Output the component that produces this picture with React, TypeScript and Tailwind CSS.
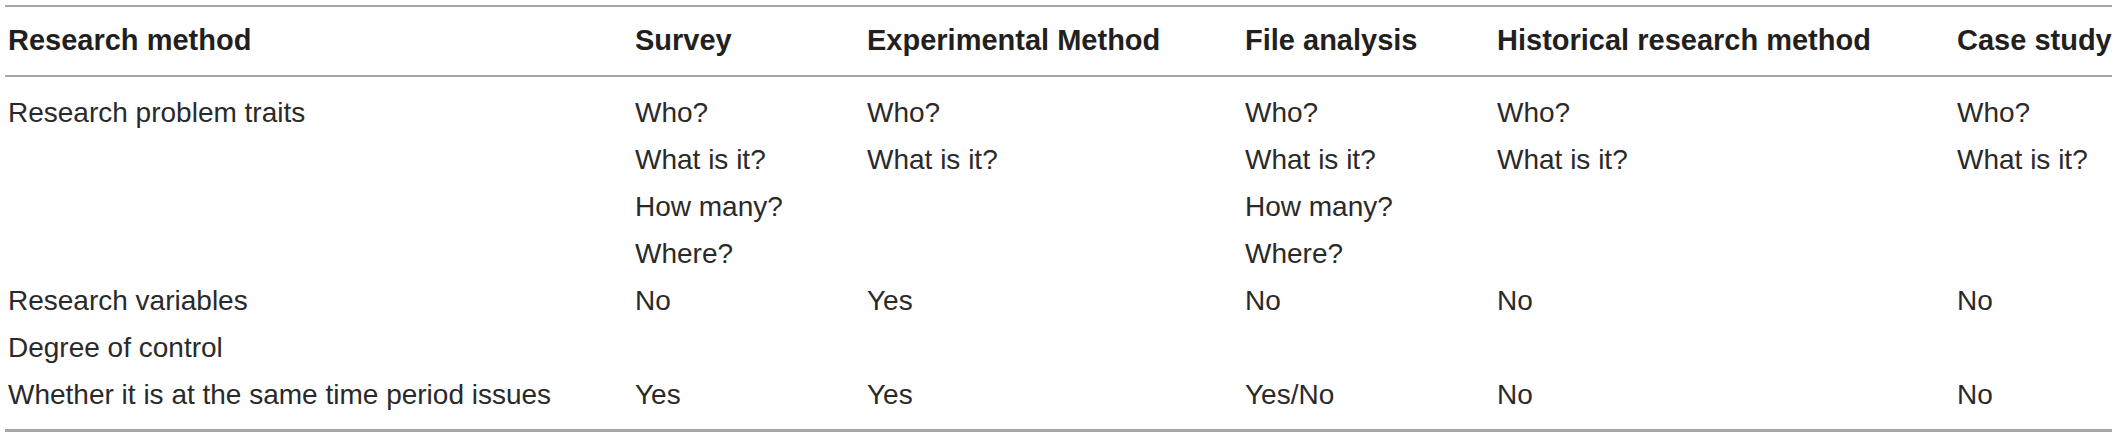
import React from "react";

const columns = [
  "Research method",
  "Survey",
  "Experimental Method",
  "File analysis",
  "Historical research method",
  "Case study",
];

const rows: string[][][] = [
  [
    ["Research problem traits"],
    ["Who?", "What is it?", "How many?", "Where?"],
    ["Who?", "What is it?"],
    ["Who?", "What is it?", "How many?", "Where?"],
    ["Who?", "What is it?"],
    ["Who?", "What is it?"],
  ],
  [["Research variables"], ["No"], ["Yes"], ["No"], ["No"], ["No"]],
  [["Degree of control"], [], [], [], [], []],
  [
    ["Whether it is at the same time period issues"],
    ["Yes"],
    ["Yes"],
    ["Yes/No"],
    ["No"],
    ["No"],
  ],
];

const grid =
  "grid grid-cols-[627px_232px_378px_252px_460px_1fr] pl-[3px]";

export default function App() {
  return (
    <div className="w-[2117px] h-[438px] bg-white pt-[5px] pl-[5px] font-['Liberation_Sans',Arial,sans-serif] text-[#231f20]">
      <div className="w-[2107px] border-t-2 border-b-[3px] border-[#a6a6a6]">
        {/* header */}
        <div className={`${grid} h-[70px] items-center border-b-2 border-[#a6a6a6] text-[29px] font-bold`}>
          {columns.map((c) => (
            <div key={c} className="whitespace-nowrap">
              {c}
            </div>
          ))}
        </div>

        {/* body */}
        <div className="pt-[12px] pb-[11px] text-[28px] leading-[47px] text-[#2a2a2a]">
          {rows.map((row, i) => (
            <div key={i} className={grid}>
              {row.map((cell, j) => (
                <div key={j} className="whitespace-nowrap min-h-[47px]">
                  {cell.map((line, k) => (
                    <div key={k}>{line}</div>
                  ))}
                </div>
              ))}
            </div>
          ))}
        </div>
      </div>
    </div>
  );
}
